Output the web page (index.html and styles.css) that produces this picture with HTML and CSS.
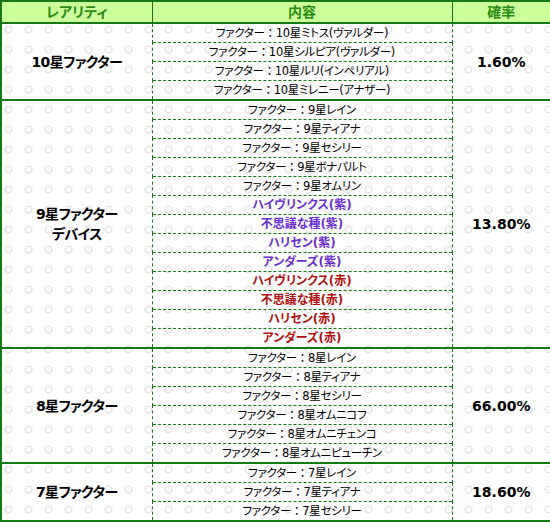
FILE: index.html
```html
<!DOCTYPE html>
<html lang="ja">
<head>
<meta charset="utf-8">
<link rel="stylesheet" href="styles.css">
</head>
<body>
<table class="rates">
  <colgroup>
    <col class="c1"><col class="c2"><col class="c3">
  </colgroup>
  <thead>
    <tr><th>レアリティ</th><th>内容</th><th>確率</th></tr>
  </thead>
  <tbody class="grp">
    <tr><td class="rar" rowspan="4">10星ファクター</td><td class="item">ファクター<span class="colon">：</span>10星ミトス(ヴァルダー)</td><td class="pct" rowspan="4">1.60%</td></tr>
    <tr><td class="item">ファクター<span class="colon">：</span>10星シルピア(ヴァルダー)</td></tr>
    <tr><td class="item">ファクター<span class="colon">：</span>10星ルリ(インペリアル)</td></tr>
    <tr><td class="item">ファクター<span class="colon">：</span>10星ミレニー(アナザー)</td></tr>
  </tbody>
  <tbody class="grp">
    <tr><td class="rar" rowspan="13">9星ファクター<br>デバイス</td><td class="item">ファクター<span class="colon">：</span>9星レイン</td><td class="pct" rowspan="13">13.80%</td></tr>
    <tr><td class="item">ファクター<span class="colon">：</span>9星ティアナ</td></tr>
    <tr><td class="item">ファクター<span class="colon">：</span>9星セシリー</td></tr>
    <tr><td class="item">ファクター<span class="colon">：</span>9星ボナパルト</td></tr>
    <tr><td class="item">ファクター<span class="colon">：</span>9星オムリン</td></tr>
    <tr><td class="item purple">ハイヴリンクス(紫)</td></tr>
    <tr><td class="item purple">不思議な種(紫)</td></tr>
    <tr><td class="item purple">ハリセン(紫)</td></tr>
    <tr><td class="item purple">アンダーズ(紫)</td></tr>
    <tr><td class="item red">ハイヴリンクス(赤)</td></tr>
    <tr><td class="item red">不思議な種(赤)</td></tr>
    <tr><td class="item red">ハリセン(赤)</td></tr>
    <tr><td class="item red">アンダーズ(赤)</td></tr>
  </tbody>
  <tbody class="grp">
    <tr><td class="rar" rowspan="6">8星ファクター</td><td class="item">ファクター<span class="colon">：</span>8星レイン</td><td class="pct" rowspan="6">66.00%</td></tr>
    <tr><td class="item">ファクター<span class="colon">：</span>8星ティアナ</td></tr>
    <tr><td class="item">ファクター<span class="colon">：</span>8星セシリー</td></tr>
    <tr><td class="item">ファクター<span class="colon">：</span>8星オムニコフ</td></tr>
    <tr><td class="item">ファクター<span class="colon">：</span>8星オムニチェンコ</td></tr>
    <tr><td class="item">ファクター<span class="colon">：</span>8星オムニピューチン</td></tr>
  </tbody>
  <tbody class="grp">
    <tr><td class="rar" rowspan="3">7星ファクター</td><td class="item">ファクター<span class="colon">：</span>7星レイン</td><td class="pct" rowspan="3">18.60%</td></tr>
    <tr><td class="item">ファクター<span class="colon">：</span>7星ティアナ</td></tr>
    <tr><td class="item">ファクター<span class="colon">：</span>7星セシリー</td></tr>
  </tbody>
</table>
</body>
</html>
```
FILE: styles.css
```css
html, body {
  margin: 0;
  padding: 0;
}
body {
  background-color: #ffffff;
  background-image: radial-gradient(circle at 8.5px 9.5px, transparent 2.4px, #e6e6e6 3px, #e6e6e6 3.8px, transparent 4.4px);
  background-size: 20px 20px;
  font-family: "DejaVu Sans", "Noto Sans CJK JP", sans-serif;
  color: #000;
}
.rates {
  width: 550px;
  table-layout: fixed;
  border-collapse: collapse;
  border: 2px solid #157a15;
}
.c1 { width: 151px; }
.c2 { width: 300px; }
.c3 { width: 99px; }

.rates th {
  background: #ccff99;
  color: #2a8c12;
  font-size: 14px;
  font-weight: bold;
  line-height: 20px;
  height: 20px;
  padding: 0;
  border-left: 1px solid #157a15;
  border-right: 1px solid #157a15;
  border-bottom: 2px solid #157a15;
  font-feature-settings: "palt";
}
.rates td {
  padding: 0;
  text-align: center;
  vertical-align: middle;
  border-left: 1px dashed #157a15;
  border-right: 1px dashed #157a15;
}
.grp {
  border-top: 2px solid #157a15;
}
.item {
  font-size: 11.5px;
  letter-spacing: -0.3px;
  line-height: 18px;
  height: 18px;
  border-top: 1px dashed #157a15;
  font-feature-settings: "palt";
  white-space: nowrap;
}
.colon {
  font-feature-settings: normal;
}
.grp tr:first-child .item {
  border-top: 2px solid #157a15;
}
.rar {
  font-size: 14px;
  letter-spacing: -0.6px;
  font-weight: bold;
  line-height: 20px;
  font-feature-settings: "palt";
}
.pct {
  font-size: 14px;
  font-weight: bold;
}
.purple {
  color: #6a2ed0;
  font-weight: bold;
  letter-spacing: 0;
  font-size: 12px;
}
.red {
  color: #b01010;
  font-weight: bold;
  letter-spacing: 0;
  font-size: 12px;
}
```
